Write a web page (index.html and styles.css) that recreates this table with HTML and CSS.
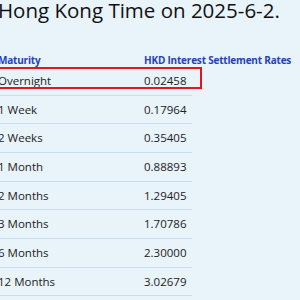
FILE: index.html
```html
<!DOCTYPE html>
<html>
<head>
<meta charset="utf-8">
<link rel="stylesheet" href="styles.css">
</head>
<body>
<div class="page">
  <h1 class="title">Hong Kong Time on 2025-6-2.</h1>
  <table class="rates">
    <colgroup><col class="c1"><col class="c2"></colgroup>
    <thead>
      <tr><th>Maturity</th><th>HKD Interest Settlement Rates</th></tr>
    </thead>
    <tbody>
      <tr class="hl"><td>Overnight</td><td>0.02458<span class="mark"></span></td></tr>
      <tr><td>1 Week</td><td>0.17964</td></tr>
      <tr><td>2 Weeks</td><td>0.35405</td></tr>
      <tr><td>1 Month</td><td>0.88893</td></tr>
      <tr><td>2 Months</td><td>1.29405</td></tr>
      <tr><td>3 Months</td><td>1.70786</td></tr>
      <tr><td>6 Months</td><td>2.30000</td></tr>
      <tr><td>12 Months</td><td>3.02679</td></tr>
    </tbody>
  </table>
</div>
</body>
</html>
```

FILE: styles.css
```css
html, body {
  margin: 0;
  padding: 0;
  background: #e9f3fa;
  overflow: hidden;
}
.page {
  margin-left: -2px;
  font-family: "Open Sans", "Noto Sans", sans-serif;
  color: #222;
}
.title {
  margin: -1px 0 0 0;
  font-weight: 400;
  font-size: 20.5px;
  line-height: 22px;
  color: #111;
  white-space: nowrap;
}
.rates {
  margin-top: 29px;
  border-collapse: collapse;
  table-layout: fixed;
  width: 194px;
}
.c1 { width: 146px; }
.c2 { width: 48px; }
.rates th {
  text-align: left;
  font-size: 10px;
  letter-spacing: -0.2px;
  font-weight: 700;
  color: #2443b5;
  padding: 3px 0 0 0;
  white-space: nowrap;
  line-height: 14px;
  overflow: visible;
}
.rates td {
  font-size: 11.5px;
  line-height: 16.67px;
  padding: 6px 0 5px 0;
  border-bottom: 1px solid #c6dcef;
  white-space: nowrap;
  color: #222;
}
.rates td:last-child { position: relative; }
.mark {
  position: absolute;
  left: -160px;
  right: -10px;
  top: 0;
  height: 22px;
  box-sizing: border-box;
  border: 2px solid #e8141c;
}
```
